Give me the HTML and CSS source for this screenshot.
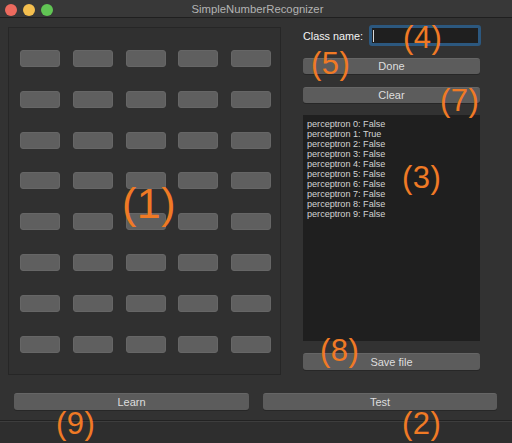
FILE: index.html
```html
<!DOCTYPE html>
<html>
<head>
<meta charset="utf-8">
<link rel="stylesheet" href="styles.css">
</head>
<body>
<div class="window">
  <div class="titlebar">
    <div class="lights">
      <span class="light red"></span>
      <span class="light yellow"></span>
      <span class="light green"></span>
    </div>
    <div class="title">SimpleNumberRecognizer</div>
  </div>
  <div class="content">
    <div class="top">
      <div class="panel">
        <div class="grid">
          <div class="cell"></div><div class="cell"></div><div class="cell"></div><div class="cell"></div><div class="cell"></div>
          <div class="cell"></div><div class="cell"></div><div class="cell"></div><div class="cell"></div><div class="cell"></div>
          <div class="cell"></div><div class="cell"></div><div class="cell"></div><div class="cell"></div><div class="cell"></div>
          <div class="cell"></div><div class="cell"></div><div class="cell"></div><div class="cell"></div><div class="cell"></div>
          <div class="cell"></div><div class="cell"></div><div class="cell"></div><div class="cell"></div><div class="cell"></div>
          <div class="cell"></div><div class="cell"></div><div class="cell"></div><div class="cell"></div><div class="cell"></div>
          <div class="cell"></div><div class="cell"></div><div class="cell"></div><div class="cell"></div><div class="cell"></div>
          <div class="cell"></div><div class="cell"></div><div class="cell"></div><div class="cell"></div><div class="cell"></div>
        </div>
      </div>
      <div class="side">
        <div class="name-row">
          <span class="label">Class name:</span>
          <div class="input"><span class="caret"></span></div>
        </div>
        <div class="btn btn-done">Done</div>
        <div class="btn btn-clear">Clear</div>
        <div class="output">
          <div>perceptron 0: False</div>
          <div>perceptron 1: True</div>
          <div>perceptron 2: False</div>
          <div>perceptron 3: False</div>
          <div>perceptron 4: False</div>
          <div>perceptron 5: False</div>
          <div>perceptron 6: False</div>
          <div>perceptron 7: False</div>
          <div>perceptron 8: False</div>
          <div>perceptron 9: False</div>
        </div>
        <div class="btn btn-save">Save file</div>
      </div>
    </div>
    <div class="bottom">
      <div class="btn btn-learn">Learn</div>
      <div class="btn btn-test">Test</div>
    </div>
  </div>
  <div class="statusbar"></div>

  <span class="note n1">(1)</span>
  <span class="note n2">(2)</span>
  <span class="note n3">(3)</span>
  <span class="note n4">(4)</span>
  <span class="note n5">(5)</span>
  <span class="note n7">(7)</span>
  <span class="note n8">(8)</span>
  <span class="note n9">(9)</span>
</div>
</body>
</html>
```
FILE: styles.css
```css
* { box-sizing: border-box; }
html, body { margin: 0; padding: 0; background: #323232; }
body { font-family: "Liberation Sans", Arial, sans-serif; }

.window {
  position: relative;
  width: 512px;
  height: 443px;
  background: #323232;
  display: flex;
  flex-direction: column;
  overflow: hidden;
}

.titlebar {
  height: 18px;
  flex: none;
  background: #383838;
  border-bottom: 1px solid #1f1f1f;
  display: flex;
  align-items: center;
  position: relative;
}
.lights {
  display: flex;
  gap: 6px;
  padding-left: 5px;
  margin-top: 2px;
}
.light {
  width: 12px;
  height: 12px;
  border-radius: 50%;
  display: block;
}
.red { background: #ed6a5e; }
.yellow { background: #f4bf4f; }
.green { background: #61c554; }
.title {
  flex: 1;
  text-align: center;
  font-size: 11.3px;
  color: #b3b3b3;
  margin-left: -50px;
  margin-top: 1px;
}

.content {
  flex: 1;
  padding: 7px 0 0 8px;
  display: flex;
  flex-direction: column;
}
.top {
  display: flex;
  gap: 22px;
}
.panel {
  width: 273px;
  height: 348px;
  margin-top: 2px;
  background: #303030;
  border: 1px solid #262626;
  padding: 22px 0 0 11px;
}
.grid {
  display: grid;
  grid-template-columns: repeat(5, 40px);
  grid-auto-rows: 17px;
  column-gap: 12.75px;
  row-gap: 23.8px;
}
.cell {
  background: #5f5f5f;
  border: 1px solid #666666;
  border-radius: 3px;
}

.side {
  width: 179px;
  display: flex;
  flex-direction: column;
}
.name-row {
  display: flex;
  align-items: center;
  height: 21px;
  gap: 6px;
}
.label {
  font-size: 10.8px;
  color: #f4f4f4;
}
.input {
  width: 112px;
  height: 21px;
  background: #1f1f1f;
  border: 3px solid #2c587f;
  border-radius: 3px;
  padding: 2px 0 0 1px;
}
.caret {
  display: block;
  width: 1px;
  height: 12px;
  background: #d8d8d8;
}

.btn {
  width: 177px;
  height: 16px;
  background: #5c5c5c;
  border-radius: 3px;
  border-top: 1px solid #666;
  box-shadow: 0 1px 0 #272727;
  color: #dedede;
  font-size: 11px;
  text-align: center;
  line-height: 15px;
}
.btn-done { margin-top: 12px; }
.btn-clear { margin-top: 13px; }
.output {
  margin-top: 12px;
  width: 177px;
  height: 226px;
  background: #1f1f1f;
  padding: 4px 0 0 4px;
  font-size: 9.1px;
  line-height: 10px;
  color: #d4d4d4;
}
.btn-save { margin-top: 12px; height: 17px; line-height: 16px; }

.bottom {
  display: flex;
  gap: 14px;
  margin-top: 18px;
  padding-left: 6px;
}
.btn-learn { width: 235px; height: 17px; line-height: 16px; }
.btn-test { width: 234px; height: 17px; line-height: 16px; }

.statusbar {
  height: 23px;
  flex: none;
  background: #2e2e2e;
  border-top: 1px solid #222222;
  box-shadow: inset 0 1px 0 #3d3d3d;
}

.note {
  position: absolute;
  color: #f07a25;
  font-family: "Liberation Sans", Arial, sans-serif;
  font-size: 31px;
  line-height: 1;
  letter-spacing: 0.5px;
}
.n1 { left: 122px; top: 182px; font-size: 43px; }
.n2 { left: 402px; top: 408px; }
.n3 { left: 402px; top: 162px; }
.n4 { left: 403px; top: 22px; }
.n5 { left: 311px; top: 48px; }
.n7 { left: 440px; top: 85px; }
.n8 { left: 320px; top: 335px; }
.n9 { left: 56px; top: 408px; }
```
